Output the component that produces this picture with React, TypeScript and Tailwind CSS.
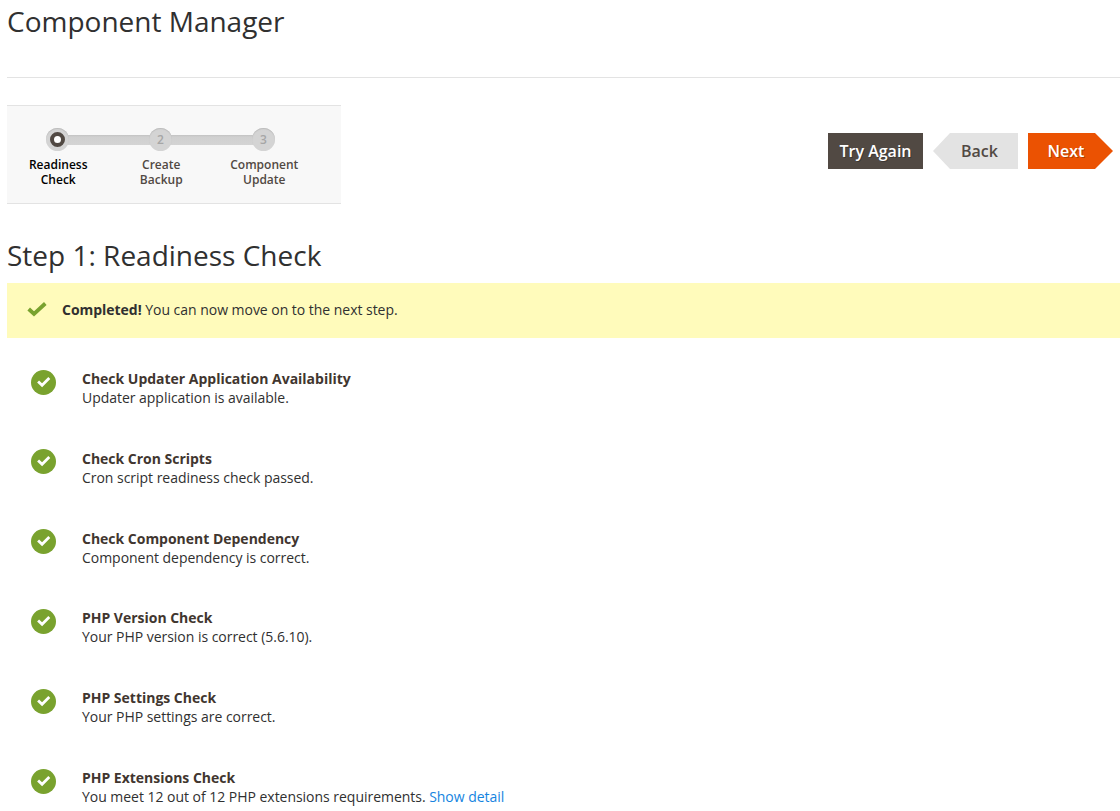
const checks = [
  { title: "Check Updater Application Availability", text: "Updater application is available." },
  { title: "Check Cron Scripts", text: "Cron script readiness check passed." },
  { title: "Check Component Dependency", text: "Component dependency is correct." },
  { title: "PHP Version Check", text: "Your PHP version is correct (5.6.10)." },
  { title: "PHP Settings Check", text: "Your PHP settings are correct." },
  { title: "PHP Extensions Check", text: "You meet 12 out of 12 PHP extensions requirements.", link: "Show detail" },
];

const steps = [
  { number: 1, lines: ["Readiness", "Check"], active: true },
  { number: 2, lines: ["Create", "Backup"], active: false },
  { number: 3, lines: ["Component", "Update"], active: false },
];

export default function App() {
  return (
    <div className="h-[811px] overflow-hidden bg-white pl-[7px] font-['Open_Sans',sans-serif] text-[14px] leading-[19px] text-[#303030]">
      <header className="h-[78px] border-b border-[#e3e3e3]">
        <h1 className="pt-[2px] text-[28px] leading-[38px]">Component Manager</h1>
      </header>
      <div className="mt-[27px] flex h-[99px] justify-between pr-[7px]">
        <nav className="relative w-[334px] border-y border-[#e3e3e3] bg-[#f8f8f8]">
          <div className="absolute left-[50px] top-[29px] h-[10px] w-[206px] bg-linear-to-b from-[#c2c2c2] via-[#d0d0d0] via-20% to-[#d4d4d4]" />
          <ol className="relative flex pt-[22px] text-center text-[12px] font-semibold leading-[15px]">
            {steps.map((s) => (
              <li key={s.number} className={s.active ? "flex w-[103px] flex-col items-center text-black" : "flex w-[103px] flex-col items-center text-[#514943]"}>
                <span className="mr-[2px] flex size-[23px] items-center justify-center rounded-full bg-[#d4d4d4] text-[#a6a6a6] shadow-[inset_0_1px_1px_#bcbcbc]">
                  {s.active ? <span className="size-[15px] rounded-full border-4 border-[#514943] bg-white" /> : s.number}
                </span>
                <span className="mr-[0.5px] mt-[6px]">{s.lines[0]}<br />{s.lines[1]}</span>
              </li>
            ))}
          </ol>
        </nav>
        <div className="flex gap-[10px] pt-[28px] text-[16px] font-semibold">
          <button className="h-[36px] w-[95px] bg-[#514943] text-white text-shadow-[1px_1px_0_#00000040]">Try Again</button>
          <button className="h-[36px] w-[85px] bg-[#e3e3e3] pl-[8px] text-[#514943] [clip-path:polygon(0_50%,17px_0,100%_0,100%_100%,17px_100%)]">Back</button>
          <button className="h-[36px] w-[85px] bg-[#eb5202] pr-[9px] text-white text-shadow-[1px_1px_0_#00000040] [clip-path:polygon(0_0,67px_0,100%_50%,67px_100%,0_100%)]">Next</button>
        </div>
      </div>
      <h2 className="mt-[32px] text-[28px] leading-[38px]">Step 1: Readiness Check</h2>
      <div className="mt-[9px] flex h-[55px] bg-[#fffbbb] pl-[20px] pt-[17px]">
        <svg className="mt-px h-[16px] w-[20px]" viewBox="0 0 20 16" fill="none"><path d="M1.7 8 7 13 18.3 2.5" stroke="#79a22e" strokeWidth="3.8" /></svg>
        <p className="ml-[15px] tracking-[-0.03px]"><b>Completed!</b> You can now move on to the next step.</p>
      </div>
      <ul className="pt-[31px]">
        {checks.map((c) => (
          <li key={c.title} className="flex h-[79.8px] pl-[24px]">
            <svg className="mt-[0.6px] size-[25px] shrink-0" viewBox="0 0 25 25" fill="none">
              <circle cx="12.5" cy="12.5" r="12.5" fill="#79a22e" />
              <path d="m7.1 11.4 4 3.9 7.2-7.2" stroke="white" strokeWidth="2.8" />
            </svg>
            <div className="ml-[26px]">
              <h3 className="font-bold tracking-[-0.015px] text-[#41362f]">{c.title}</h3>
              <p className="tracking-[-0.03px]">{c.text} {c.link && <a className="text-[#1484df]">{c.link}</a>}</p>
            </div>
          </li>
        ))}
      </ul>
    </div>
  );
}
